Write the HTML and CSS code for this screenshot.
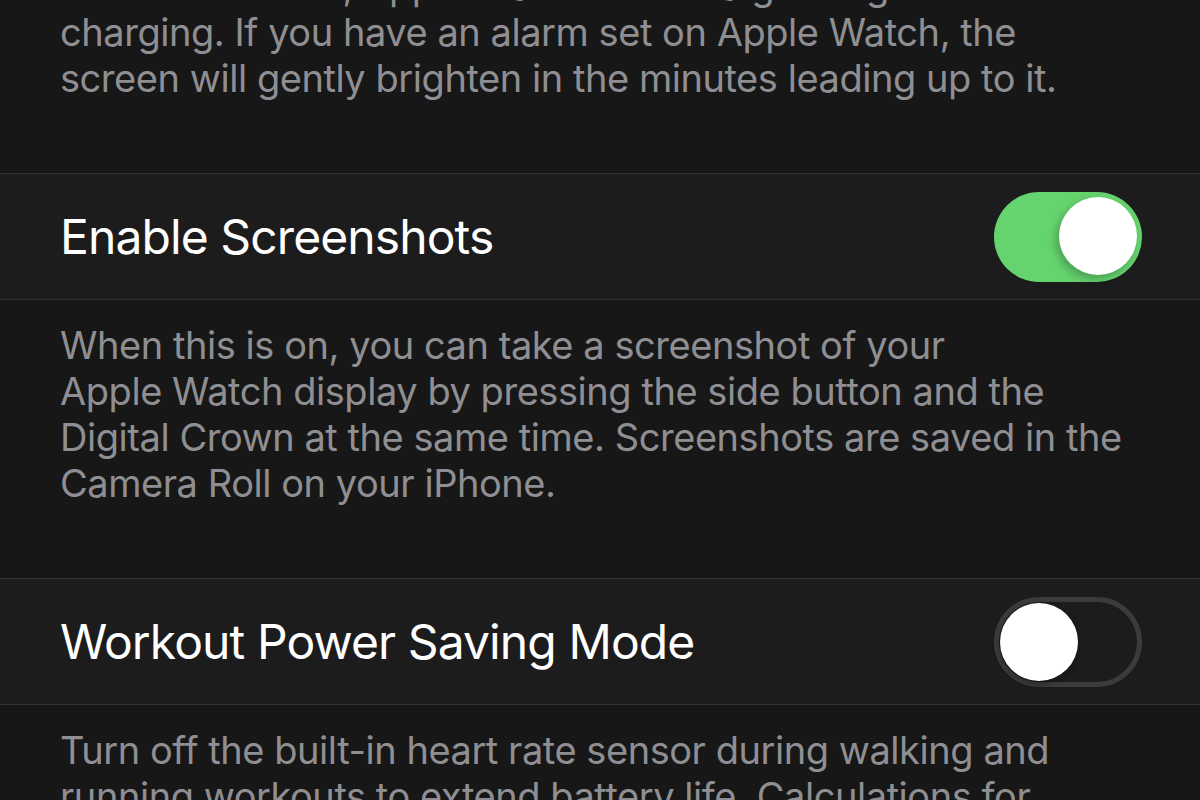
FILE: index.html
```html
<!DOCTYPE html>
<html lang="en">
<head>
<meta charset="utf-8">
<title>Settings</title>
<link rel="stylesheet" href="styles.css">
</head>
<body>
<div class="page">
  <div class="footer footer-first">
    <p>When turned on, Apple Watch shows a glowing clock while<br>charging. If you have an alarm set on Apple Watch, the<br>screen will gently brighten in the minutes leading up to it.</p>
  </div>
  <div class="row">
    <span class="row-title">Enable Screenshots</span>
    <span class="switch switch-on"><span class="knob"></span></span>
  </div>
  <div class="footer">
    <p>When this is on, you can take a screenshot of your<br>Apple Watch display by pressing the side button and the<br>Digital Crown at the same time. Screenshots are saved in the<br>Camera Roll on your iPhone.</p>
  </div>
  <div class="row">
    <span class="row-title">Workout Power Saving Mode</span>
    <span class="switch switch-off"><span class="knob"></span></span>
  </div>
  <div class="footer">
    <p>Turn off the built-in heart rate sensor during walking and<br>running workouts to extend battery life. Calculations for<br>energy burned may be less accurate when this is on.</p>
  </div>
</div>
</body>
</html>
```
FILE: styles.css
```css
html, body {
  margin: 0;
  padding: 0;
  background: #171717;
  overflow: hidden;
}
.page {
  width: 1200px;
  margin-top: -59px;
  font-family: "Inter", "Noto Sans", sans-serif;
}
.footer {
  padding: 22px 58px 72px 60px;
  color: #8f8f93;
  font-size: 38px;
  line-height: 46px;
  letter-spacing: -0.45px;
}
.footer p {
  margin: 0;
  white-space: nowrap;
}
.row {
  display: flex;
  align-items: center;
  justify-content: space-between;
  height: 125px;
  padding: 0 58px 0 60px;
  background: #1c1c1d;
  border-top: 1px solid #333335;
  border-bottom: 1px solid #333335;
}
.row-title {
  color: #ffffff;
  font-size: 48px;
  letter-spacing: -0.9px;
}
.switch {
  position: relative;
  box-sizing: border-box;
  width: 148px;
  height: 90px;
  border-radius: 45px;
  flex: none;
}
.switch-on {
  background: #65d36e;
}
.switch-off {
  background: #1c1c1d;
  border: 5px solid #3b3b3d;
}
.knob {
  position: absolute;
  width: 78px;
  height: 78px;
  border-radius: 50%;
  background: #ffffff;
  top: 5px;
}
.switch-on .knob {
  right: 5px;
  box-shadow: -3px 4px 8px rgba(0, 0, 0, 0.25);
}
.switch-off .knob {
  top: 1px;
  left: 1px;
  box-shadow: 0 3px 6px rgba(0, 0, 0, 0.3);
}
```
